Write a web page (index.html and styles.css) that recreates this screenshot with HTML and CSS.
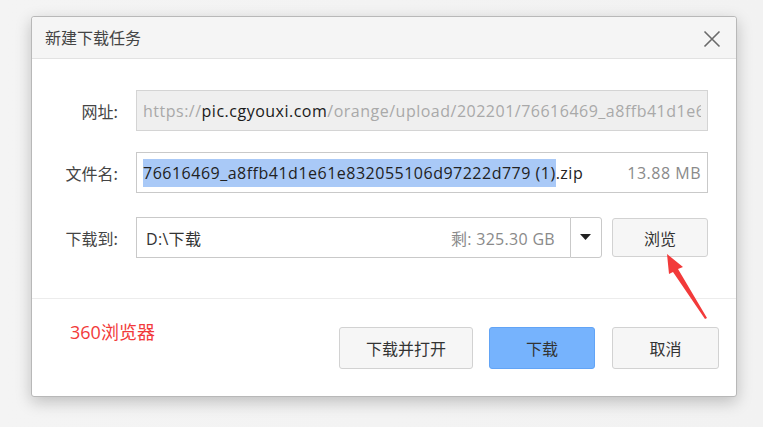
FILE: index.html
```html
<!DOCTYPE html>
<html lang="zh-CN">
<head>
<meta charset="utf-8">
<title>新建下载任务</title>
<link rel="stylesheet" href="styles.css">
</head>
<body>
<div class="dialog">
  <div class="titlebar">
    <span class="title">新建下载任务</span>
    <svg class="close" width="18" height="18" viewBox="0 0 18 18"><path d="M1.5 1.5 L16.5 16.5 M16.5 1.5 L1.5 16.5" stroke="#6a6a6a" stroke-width="1.6" fill="none"/></svg>
  </div>
  <div class="content">
    <div class="row">
      <label class="label">网址:</label>
      <div class="field field-disabled"><span class="url"><span class="dim">https://</span><span class="host">pic.cgyouxi.com</span><span class="dim">/orange/upload/202201/76616469_a8ffb41d1e6</span></span></div>
    </div>
    <div class="row row2">
      <label class="label">文件名:</label>
      <div class="field"><span class="fname"><span class="sel">76616469_a8ffb41d1e61e832055106d97222d779 (1)</span>.zip</span><span class="size">13.88 MB</span></div>
    </div>
    <div class="row row3">
      <label class="label">下载到:</label>
      <div class="pathbox">
        <div class="path"><span>D:\下载</span><span class="free">剩: 325.30 GB</span></div>
        <div class="drop"><svg width="12" height="7" viewBox="0 0 12 7"><path d="M0 0 H11 L5.5 6 Z" fill="#222"/></svg></div>
      </div>
      <button class="btn browse">浏览</button>
    </div>
  </div>
  <div class="footer">
    <span class="brand">360浏览器</span>
    <div class="actions">
      <button class="btn act open">下载并打开</button>
      <button class="btn act primary">下载</button>
      <button class="btn act cancel">取消</button>
    </div>
  </div>
</div>
<svg class="arrow" width="60" height="80" viewBox="0 0 60 80"><polygon points="6,14 22,27 17,29 46,78 44,79 12,32 8,34" fill="#f23a3a"/></svg>
</body>
</html>
```
FILE: styles.css
```css
html, body {
  margin: 0;
  padding: 0;
}
body {
  width: 778px;
  height: 427px;
  overflow: hidden;
  position: relative;
  background: linear-gradient(to right, #f4f4f4 0, #f2f2f2 763px, #ffffff 763px);
  font-family: "Noto Sans CJK SC", "Noto Sans", sans-serif;
  color: #333;
}
.dialog {
  position: absolute;
  left: 31px;
  top: 16px;
  width: 704px;
  height: 379px;
  background: #fff;
  border: 1px solid #b8b8b8;
  border-radius: 3px;
  box-shadow: 0 5px 16px rgba(0,0,0,0.22);
  display: flex;
  flex-direction: column;
}
.titlebar {
  height: 41px;
  background: #f5f5f5;
  border-bottom: 1px solid #e2e2e2;
  display: flex;
  align-items: center;
  justify-content: space-between;
  padding: 0 15px 0 13px;
  border-radius: 3px 3px 0 0;
}
.title {
  font-size: 16px;
  color: #444;
  margin-top: -2px;
}
.close {
  margin-top: 2px;
}
.content {
  padding: 31px 28px 0 0;
  height: 208px;
  border-bottom: 1px solid #ececec;
}
.row {
  display: flex;
  align-items: center;
  height: 41px;
}
.row2 { margin-top: 21px; }
.row3 { margin-top: 24px; }
.label {
  width: 86px;
  text-align: right;
  font-size: 16px;
  color: #444;
  margin-right: 18px;
  flex: none;
}
.field {
  flex: 1;
  height: 39px;
  border: 1px solid #c9c9c9;
  display: flex;
  align-items: center;
  padding: 0 6px 0 6px;
  overflow: hidden;
  white-space: nowrap;
  font-family: "Open Sans", "Noto Sans CJK SC", sans-serif;
  font-size: 16px;
  letter-spacing: 0.5px;
}
.field-disabled {
  background: #efefef;
  border-color: #d4d4d4;
}
.url { overflow: hidden; }
.dim { color: #a9a9a9; }
.host { color: #1a1a1a; }
.fname {
  color: #222;
  flex: 1;
}
.sel {
  background: #a9c9f7;
  padding: 3px 0;
}
.size {
  color: #8a8a8a;
}
.pathbox {
  flex: none;
  width: 466px;
  height: 41px;
  display: flex;
}
.path {
  flex: 1;
  border: 1px solid #c9c9c9;
  border-right: none;
  display: flex;
  align-items: center;
  justify-content: space-between;
  padding: 0 15px 0 9px;
  font-family: "Open Sans", "Noto Sans CJK SC", sans-serif;
  font-size: 16px;
  letter-spacing: 0.3px;
  color: #333;
}
.free { color: #8a8a8a; }
.drop {
  width: 30px;
  border: 1px solid #c9c9c9;
  border-radius: 0 3px 3px 0;
  display: flex;
  align-items: center;
  justify-content: center;
  height: 39px;
}
.btn {
  font-family: "Noto Sans CJK SC", sans-serif;
  font-size: 16px;
  color: #333;
  background: #f6f6f6;
  border: 1px solid #d2d2d2;
  border-radius: 3px;
  padding: 0;
  cursor: pointer;
}
.browse {
  width: 96px;
  height: 39px;
  margin-left: 10px;
}
.footer {
  flex: 1;
  display: flex;
  justify-content: space-between;
  padding: 0 17px 0 38px;
}
.brand {
  color: #f23a3a;
  font-size: 18px;
  margin-top: 19px;
  font-family: "Open Sans", "Noto Sans CJK SC", sans-serif;
}
.actions {
  display: flex;
  gap: 16px;
  margin-top: 28px;
}
.act {
  height: 42px;
}
.open { width: 134px; }
.primary {
  width: 106px;
  background: #76b3fd;
  border-color: #62a4f6;
}
.cancel { width: 107px; margin-left: 1px; }
.arrow {
  position: absolute;
  left: 661px;
  top: 240px;
}
```
